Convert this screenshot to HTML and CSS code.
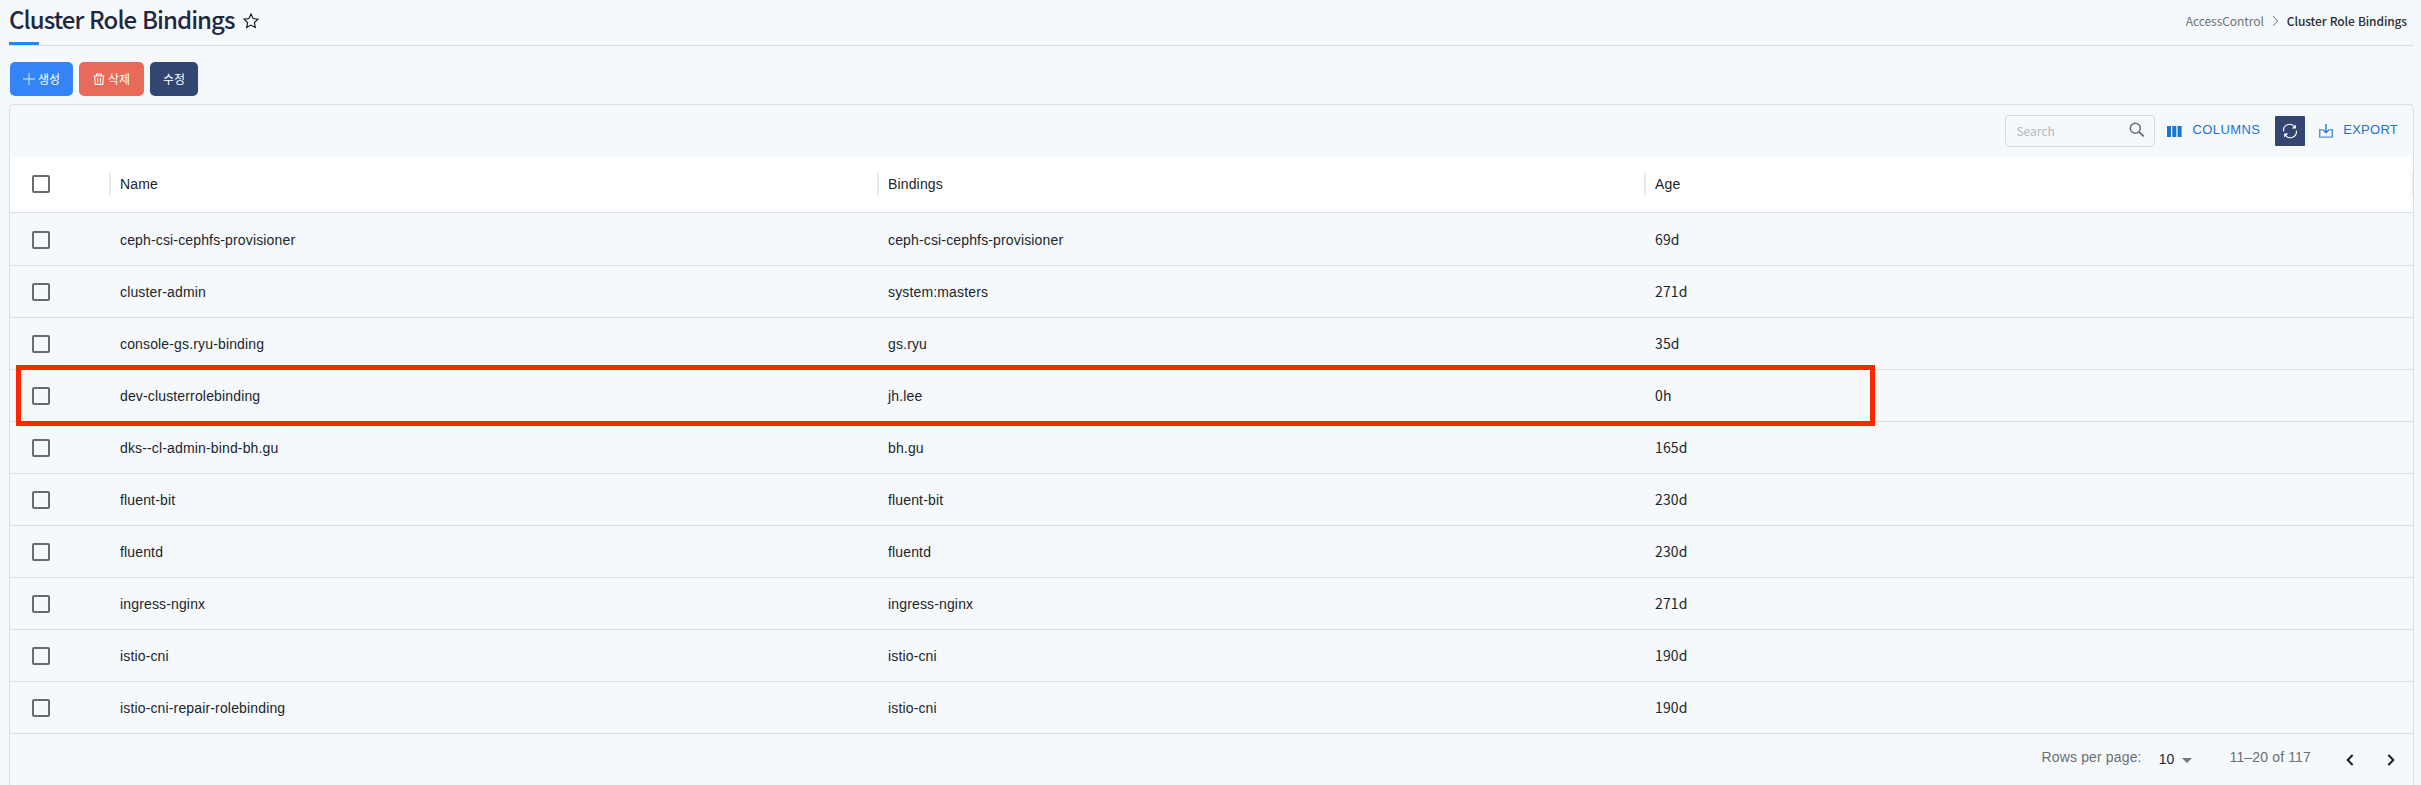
FILE: index.html
```
<!DOCTYPE html>
<html lang="ko">
<head>
<meta charset="utf-8">
<title>Cluster Role Bindings</title>
<link rel="stylesheet" href="styles.css">
</head>
<body>
<header class="page-header">
  <h1 class="title">Cluster Role Bindings</h1>
  <svg class="star" width="18" height="18" viewBox="0 0 24 24"><path d="M12 2.8l2.8 6 6.5.8-4.8 4.5 1.3 6.5-5.8-3.2-5.8 3.2 1.3-6.5-4.8-4.5 6.5-.8z" fill="none" stroke="#111" stroke-width="1.5"/></svg>
  <nav class="breadcrumb">
    <span class="crumb">AccessControl</span>
    <svg width="7" height="12" viewBox="0 0 7 12"><path d="M1 1l4.6 5L1 11" fill="none" stroke="#777" stroke-width="1"/></svg>
    <span class="crumb current">Cluster Role Bindings</span>
  </nav>
</header>
<div class="actions">
  <button class="btn create"><svg width="12" height="12" viewBox="0 0 12 12"><path d="M6 0v12M0 6h12" stroke="#fff" stroke-width="1" opacity=".8"/></svg><span>생성</span></button>
  <button class="btn delete"><svg width="12" height="12" viewBox="0 0 12 12"><path d="M.5 3h11M3.5 3V1h5v2M1.7 3l.5 8.4h7.6l.5-8.4M4.6 5v4.6M7.4 5v4.6" fill="none" stroke="#fff" stroke-width="1.1"/></svg><span>삭제</span></button>
  <button class="btn edit"><span>수정</span></button>
</div>
<main class="panel">
  <div class="toolbar">
    <div class="search"><span>Search</span><svg width="16" height="16" viewBox="0 0 16 16"><circle cx="6.3" cy="6.3" r="5" fill="none" stroke="#686b7c" stroke-width="1.5"/><path d="M10 10l4.8 4.4" stroke="#686b7c" stroke-width="1.8"/></svg></div>
    <div class="tool columns"><svg width="15" height="11" viewBox="0 0 15 11"><path d="M0 0h4v11H0zM5.3 0h4v11h-4zM10.6 0h4v11h-4z" fill="#1976d2"/></svg><span>COLUMNS</span></div>
    <div class="refresh"><svg width="16" height="16" viewBox="0 0 16 16"><path d="M1.7 8.4A6 6 0 0 1 12.6 4M14.3 7.6A6 6 0 0 1 3.4 12" fill="none" stroke="#fff" stroke-width="1.1"/><path d="M13.9 1.4v4.2H9.7zM2.1 14.6v-4.2h4.2z" fill="#fff"/></svg></div>
    <div class="tool export"><svg width="14" height="14" viewBox="0 0 14 14"><path d="M3 5.7H.7v7.4h12.6V5.7H11" fill="none" stroke="#5691de" stroke-width="1.4"/><path d="M7 0v8.6M3.8 5.6L7 8.8l3.2-3.2" fill="none" stroke="#2f79d5" stroke-width="1.4"/></svg><span>EXPORT</span></div>
  </div>
  <div class="grid">
    <div class="row head"><i class="check"></i><span class="cell">Name</span><span class="cell">Bindings</span><span class="cell">Age</span><b class="end"></b></div>
    <div class="row"><i class="check"></i><span class="cell">ceph-csi-cephfs-provisioner</span><span class="cell">ceph-csi-cephfs-provisioner</span><span class="cell age">69d</span></div>
    <div class="row"><i class="check"></i><span class="cell">cluster-admin</span><span class="cell">system:masters</span><span class="cell age">271d</span></div>
    <div class="row"><i class="check"></i><span class="cell">console-gs.ryu-binding</span><span class="cell">gs.ryu</span><span class="cell age">35d</span></div>
    <div class="row marked"><i class="check"></i><span class="cell">dev-clusterrolebinding</span><span class="cell">jh.lee</span><span class="cell age">0h</span></div>
    <div class="row"><i class="check"></i><span class="cell">dks--cl-admin-bind-bh.gu</span><span class="cell">bh.gu</span><span class="cell age">165d</span></div>
    <div class="row"><i class="check"></i><span class="cell">fluent-bit</span><span class="cell">fluent-bit</span><span class="cell age">230d</span></div>
    <div class="row"><i class="check"></i><span class="cell">fluentd</span><span class="cell">fluentd</span><span class="cell age">230d</span></div>
    <div class="row"><i class="check"></i><span class="cell">ingress-nginx</span><span class="cell">ingress-nginx</span><span class="cell age">271d</span></div>
    <div class="row"><i class="check"></i><span class="cell">istio-cni</span><span class="cell">istio-cni</span><span class="cell age">190d</span></div>
    <div class="row"><i class="check"></i><span class="cell">istio-cni-repair-rolebinding</span><span class="cell">istio-cni</span><span class="cell age">190d</span></div>
  </div>
  <footer class="pager">
    <span class="per-page">Rows per page:</span>
    <span class="size">10</span>
    <svg class="caret" width="10" height="5" viewBox="0 0 10 5"><path d="M0 0h10L5 5z" fill="#757575"/></svg>
    <span class="range">11–20 of 117</span>
    <svg class="prev" width="8" height="12" viewBox="0 0 8 12"><path d="M6.6 1L1.7 6l4.9 5" fill="none" stroke="#1c1c1c" stroke-width="2"/></svg>
    <svg class="next" width="8" height="12" viewBox="0 0 8 12"><path d="M1.4 1l4.9 5-4.9 5" fill="none" stroke="#1c1c1c" stroke-width="2"/></svg>
  </footer>
</main>
</body>
</html>
```
FILE: styles.css
```
*, *::before, *::after { box-sizing: border-box; }
body {
  margin: 0;
  padding: 0 7px 0 9px;
  background: #f5f9fc;
  color: #212529;
  font-family: "Liberation Sans", "Noto Sans CJK KR", sans-serif;
  font-size: 14px;
}
svg { display: block; flex: none; }
.page-header {
  position: relative;
  display: flex;
  align-items: center;
  height: 46px;
  padding: 0 7px 7px 0;
  border-bottom: 1px solid #dadee2;
  font-family: "Noto Sans CJK KR", sans-serif;
}
.page-header::after {
  content: "";
  position: absolute;
  left: 0;
  bottom: 0;
  width: 30px;
  height: 3px;
  background: #2684f0;
}
.title {
  margin: 0;
  font-size: 24px;
  font-weight: 500;
  line-height: 38px;
  letter-spacing: -0.96px;
  color: #1f2840;
}
.star { margin: 3px 0 0 7px; }
.breadcrumb {
  display: flex;
  align-items: center;
  gap: 8px;
  margin-left: auto;
  padding-top: 4px;
  font-size: 12px;
  line-height: 18px;
}
.crumb { color: #6e7174; letter-spacing: -.05px; }
.crumb.current { color: #2b2e31; font-weight: 500; letter-spacing: -.13px; }
.actions { display: flex; gap: 6px; padding: 16px 0 8px 1px; }
.btn {
  display: flex;
  align-items: center;
  justify-content: center;
  gap: 3px;
  height: 34px;
  padding: 0;
  border: 0;
  border-radius: 5px;
  color: #fff;
  font: 12px/18px "Noto Sans CJK KR", sans-serif;
}
.create { width: 63px; background: #3385f7; }
.delete { width: 65px; background: #e86a5b; }
.edit { width: 48px; background: #334671; }
.panel {
  height: 681px;
  border: 1px solid #dadee2;
  border-bottom: 0;
  border-radius: 5px 5px 0 0;
}
.toolbar {
  display: flex;
  align-items: flex-start;
  height: 52px;
  padding: 10px 15px 0 0;
  justify-content: flex-end;
}
.search {
  display: flex;
  align-items: center;
  justify-content: space-between;
  width: 150px;
  height: 32px;
  padding: 0 9px 2px 10px;
  border: 1px solid #d6dade;
  border-radius: 4px;
  color: #b3b8be;
  font: 12px/18px "Noto Sans CJK KR", sans-serif;
}
.search span { padding-top: 2px; }
.tool {
  display: flex;
  align-items: center;
  height: 28px;
  color: #1f70cf;
  font-size: 13px;
  letter-spacing: .4px;
}
.tool svg { margin-top: 4px; }
.columns { margin-left: 12px; }
.columns span { margin-left: 10px; }
.refresh {
  display: flex;
  align-items: center;
  justify-content: center;
  width: 30px;
  height: 30px;
  margin: 1px 14px 0 15px;
  border-radius: 1px;
  background: #334671;
}
.export { letter-spacing: .25px; }
.export span { margin-left: 10px; }
.row {
  position: relative;
  display: grid;
  grid-template-columns: 110px 768px 767px 1fr;
  align-items: center;
  height: 52px;
  padding-top: 1px;
  border-bottom: 1px solid #dadee2;
  letter-spacing: .15px;
}
.row:nth-child(2) { height: 53px; padding-top: 2px; }
.head { height: 56px; padding: 0 0 1px; background: #fff; }
.check {
  width: 18px;
  height: 18px;
  margin-left: 22px;
  border: 2px solid #6b6b6b;
  border-radius: 2px;
}
.cell { line-height: 20px; }
.head .cell {
  display: flex;
  align-items: center;
  height: 24px;
  margin-left: -11px;
  padding-left: 9px;
  border-left: 2px solid #e9eaeb;
}
.end {
  position: absolute;
  right: 0;
  top: 15px;
  width: 1px;
  height: 24px;
  background: #e9eaeb;
}
.age { padding-bottom: 2px; font-family: "Noto Sans CJK KR", sans-serif; }
.marked::after {
  content: "";
  position: absolute;
  z-index: 1;
  left: 6px;
  top: -5px;
  width: 1859px;
  height: 61px;
  border: 5px solid #ff2600;
}
.pager {
  display: flex;
  align-items: flex-start;
  justify-content: flex-end;
  padding: 14px 18px 0 0;
  color: #6b6f73;
  letter-spacing: .15px;
  line-height: 18px;
}
.size { margin: 2px 7px 0 17px; color: #212529; }
.caret { margin-top: 10px; }
.range { margin-left: 38px; }
.prev { margin: 6px 33px 0 35px; }
.next { margin-top: 6px; }
```
